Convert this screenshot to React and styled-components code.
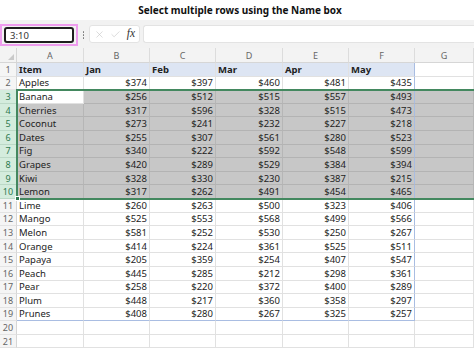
import React from "react";
import styled, { createGlobalStyle } from "styled-components";
import { X, Check } from "lucide-react";

const Global = createGlobalStyle`
  html, body { margin: 0; padding: 0; background: #ffffff; }
  body { font-family: "Noto Sans", "Open Sans", sans-serif; }
  * { box-sizing: border-box; }
`;

const Page = styled.div`
  width: 474px;
  height: 349px;
  overflow: hidden;
  display: flex;
  flex-direction: column;
  background: #fff;
`;

const Title = styled.div`
  height: 20px;
  display: flex;
  align-items: center;
  justify-content: center;
  font-weight: 700;
  font-size: 10px;
  color: #111;
  padding-left: 6px;
`;

const Toolbar = styled.div`
  height: 28px;
  background: #f2f2f2;
  display: flex;
  align-items: flex-start;
  padding-top: 4px;
`;

const NameFrame = styled.div`
  width: 78px;
  height: 22px;
  border: 2px solid #ee9cee;
  padding: 1px 2px;
  display: flex;
`;

const NameBox = styled.div`
  flex: 1;
  border: 2px solid #1e1e1e;
  border-radius: 3px;
  background: #fff;
  display: flex;
  align-items: center;
  padding-left: 4px;
  font-size: 9.5px;
  color: #333;
`;

const Dots = styled.div`
  width: 11px;
  height: 22px;
  display: flex;
  flex-direction: column;
  align-items: center;
  justify-content: center;
  gap: 1.5px;
  span {
    width: 1.5px;
    height: 1.5px;
    border-radius: 50%;
    background: #777;
  }
`;

const FxGroup = styled.div`
  margin-top: 1px;
  width: 51px;
  height: 18px;
  background: #fff;
  border: 1px solid #e3e3e3;
  border-radius: 3px;
  display: flex;
  align-items: center;
  justify-content: space-between;
  padding: 0 4px 0 4px;
  color: #c4c4c4;
`;

const Fx = styled.span`
  font-family: "Liberation Serif", serif;
  font-style: italic;
  font-size: 11.5px;
  color: #333;
  line-height: 1;
`;

const Formula = styled.div`
  margin-top: 1px;
  margin-left: 3px;
  flex: 1;
  height: 18px;
  background: #fff;
  border: 1px solid #e3e3e3;
  border-right: none;
  border-radius: 3px 0 0 3px;
`;

const Sheet = styled.div`
  position: relative;
  display: grid;
  grid-template-columns: 17px 67px 66px 66px 67px 66px 66px 1fr;
  grid-template-rows: 15px repeat(21, 13.6px);
  font-size: 9.5px;
  color: #222;
`;

const Corner = styled.div`
  background: #f3f3f3;
  border-right: 1px solid #d6d6d6;
  border-bottom: 1px solid #d6d6d6;
  display: flex;
  align-items: flex-end;
  justify-content: flex-end;
  padding: 0 2px 2px 0;
`;

const ColHead = styled.div`
  background: #f3f3f3;
  border-right: 1px solid #dcdcdc;
  border-bottom: 1px solid #d6d6d6;
  display: flex;
  align-items: center;
  justify-content: center;
  color: #666;
  font-size: 9px;
`;

const RowHead = styled.div`
  background: ${(p) => (p.$sel ? "#d4ecdd" : "#f5f5f5")};
  color: ${(p) => (p.$sel ? "#2e7a50" : "#666")};
  border-right: 1px solid #d6d6d6;
  border-bottom: 1px solid ${(p) => (p.$sel ? "#bcd9c7" : "#e3e3e3")};
  display: flex;
  align-items: center;
  justify-content: center;
  font-size: 9px;
`;

const fills = {
  none: "#ffffff",
  head: "#dde5f3",
  sel: "#c7c7c7",
};

const Cell = styled.div`
  background: ${(p) => fills[p.$fill]};
  border-right: 1px solid
    ${(p) => (p.$blueRight ? "#a9bde2" : p.$fill === "sel" ? "#b6b6b6" : "#e1e1e1")};
  border-bottom: 1px solid
    ${(p) => (p.$blueBottom ? "#a9bde2" : p.$fill === "sel" ? "#b3b3b3" : "#e1e1e1")};
  display: flex;
  align-items: center;
  justify-content: ${(p) => (p.$right ? "flex-end" : "flex-start")};
  padding: 0 2px 0 2px;
  font-weight: ${(p) => (p.$bold ? 700 : 400)};
  white-space: nowrap;
  overflow: hidden;
`;

const Selection = styled.div`
  position: absolute;
  left: 16px;
  right: -4px;
  top: 41.2px;
  height: 110.8px;
  border: 2px solid #43885f;
  pointer-events: none;
`;

const Handle = styled.div`
  position: absolute;
  left: -3px;
  bottom: -3px;
  width: 5px;
  height: 5px;
  background: #2f7a4e;
  border: 1px solid #fff;
`;

const header = ["Item", "Jan", "Feb", "Mar", "Apr", "May"];
const data = [
  ["Apples", 374, 397, 460, 481, 435],
  ["Banana", 256, 512, 515, 557, 493],
  ["Cherries", 317, 596, 328, 515, 473],
  ["Coconut", 273, 241, 232, 227, 218],
  ["Dates", 255, 307, 561, 280, 523],
  ["Fig", 340, 222, 592, 548, 599],
  ["Grapes", 420, 289, 529, 384, 394],
  ["Kiwi", 328, 330, 230, 387, 215],
  ["Lemon", 317, 262, 491, 454, 465],
  ["Lime", 260, 263, 500, 323, 406],
  ["Mango", 525, 553, 568, 499, 566],
  ["Melon", 581, 252, 530, 250, 267],
  ["Orange", 414, 224, 361, 525, 511],
  ["Papaya", 205, 359, 254, 407, 547],
  ["Peach", 445, 285, 212, 298, 361],
  ["Pear", 258, 220, 372, 400, 289],
  ["Plum", 448, 217, 360, 358, 297],
  ["Prunes", 408, 280, 267, 325, 257],
];

const letters = ["A", "B", "C", "D", "E", "F", "G"];

function rowValues(r) {
  if (r === 1) return [...header, ""];
  if (r >= 2 && r <= 19) {
    const d = data[r - 2];
    return [d[0], ...d.slice(1).map((v) => "$" + v), ""];
  }
  return ["", "", "", "", "", "", ""];
}

export default function App() {
  const rows = [];
  for (let r = 1; r <= 21; r++) {
    const sel = r >= 3 && r <= 10;
    const vals = rowValues(r);
    rows.push(
      <RowHead key={"h" + r} $sel={sel}>
        {r}
      </RowHead>
    );
    vals.forEach((v, c) => {
      let fill = "none";
      if (sel && !(r === 3 && c === 0)) fill = "sel";
      else if (r === 1 && c < 6) fill = "head";
      rows.push(
        <Cell
          key={r + "-" + c}
          $fill={fill}
          $right={r > 1 && c > 0}
          $bold={r === 1}
          $blueRight={c === 5 && r <= 19}
          $blueBottom={r === 19 && c < 6}
        >
          {v}
        </Cell>
      );
    });
  }

  return (
    <Page>
      <Global />
      <Title>Select multiple rows using the Name box</Title>
      <Toolbar>
        <NameFrame>
          <NameBox>3:10</NameBox>
        </NameFrame>
        <Dots>
          <span />
          <span />
          <span />
        </Dots>
        <FxGroup>
          <X size={11} strokeWidth={1.3} />
          <Check size={11} strokeWidth={1.3} />
          <Fx>fx</Fx>
        </FxGroup>
        <Formula />
      </Toolbar>
      <Sheet>
        <Corner>
          <svg width="6" height="6" viewBox="0 0 6 6">
            <polygon points="6,0 6,6 0,6" fill="#c9c9c9" />
          </svg>
        </Corner>
        {letters.map((l) => (
          <ColHead key={l}>{l}</ColHead>
        ))}
        {rows}
        <Selection>
          <Handle />
        </Selection>
      </Sheet>
    </Page>
  );
}
